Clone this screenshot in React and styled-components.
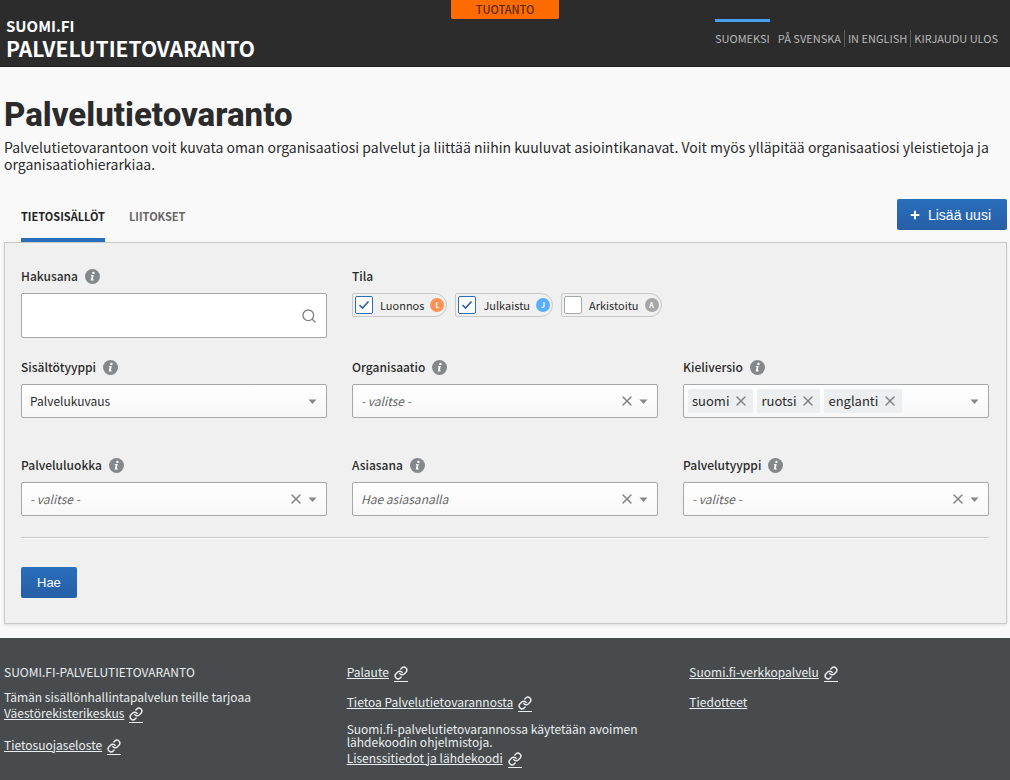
import React, { useState } from 'react';
import styled, { createGlobalStyle, css } from 'styled-components';
import { Plus, X, Link as LinkIcon, Search } from 'lucide-react';

const GlobalStyle = createGlobalStyle`
  * {
    box-sizing: border-box;
  }

  body {
    margin: 0;
    background: #f9f9f9;
    color: #2b2b2b;
    font-family: 'Noto Sans CJK SC', 'Noto Sans', sans-serif;
    font-size: 12px;
    line-height: 16px;
  }

  button,
  input,
  select {
    font: inherit;
    color: inherit;
  }
`;

const Page = styled.div`
  display: flex;
  flex-direction: column;
  min-height: 100vh;
`;

const Header = styled.header`
  display: grid;
  grid-template-columns: 1fr 108px 1fr;
  align-items: start;
  height: 67px;
  background: #2c2c2c;
  border-bottom: 1px solid #1f1b1e;
`;

const Logo = styled.div`
  display: flex;
  flex-direction: column;
  padding: 17px 0 0 6px;
  color: #fff;
  font-weight: 700;
`;

const LogoSmall = styled.span`
  font-size: 15px;
  line-height: 18px;
`;

const LogoLarge = styled.span`
  font-size: 21px;
  line-height: 26px;
`;

const Environment = styled.div`
  height: 19px;
  background: #ff6b00;
  border-radius: 0 0 2px 2px;
  color: #5a2a0c;
  font-size: 11px;
  font-weight: 500;
  line-height: 18px;
  text-align: center;
`;

const LanguageNav = styled.nav`
  display: flex;
  justify-content: flex-end;
  padding: 19px 12px 0 0;
`;

const LanguageLink = styled.a`
  padding-top: 8px;
  border-top: 3px solid ${props => (props.$active ? '#4a9fee' : 'transparent')};
  margin-left: ${props => (props.$divided ? '3px' : '8px')};
  color: #b9b9b9;
  font-size: 11px;
  line-height: 17px;
  text-decoration: none;
  white-space: nowrap;

  ${props => props.$divided && css`
    padding-left: 4px;
    background: linear-gradient(#5c5c5c, #5c5c5c) left bottom / 1px 17px no-repeat;
  `}
`;

const Main = styled.main`
  padding: 28px 3px 14px 4px;
`;

const Title = styled.h1`
  margin: 0;
  font-family: Roboto, sans-serif;
  font-size: 33px;
  font-weight: 800;
  line-height: 40px;
`;

const Intro = styled.p`
  margin: 4px 0 0;
  font-size: 14px;
  line-height: 17px;
`;

const TabBar = styled.div`
  display: flex;
  align-items: flex-start;
  justify-content: space-between;
  margin-top: 26px;
  height: 43px;
`;

const Tabs = styled.div`
  display: flex;
  gap: 24px;
  height: 100%;
  padding-left: 17px;
`;

const Tab = styled.button`
  padding: 9px 0 14px;
  border: 0;
  border-bottom: 4px solid ${props => (props.$active ? '#2a6ebb' : 'transparent')};
  background: none;
  color: ${props => (props.$active ? '#222' : '#666')};
  font-size: 11px;
  font-weight: 700;
  cursor: pointer;
`;

const PrimaryButton = styled.button`
  display: flex;
  align-items: center;
  gap: 7px;
  height: 31px;
  padding: 0 16px;
  border: 0;
  border-radius: 2px;
  background: linear-gradient(#2a6ebb, #265fa6);
  color: #fff;
  font-family: 'Liberation Sans', Arial, sans-serif;
  font-size: ${props => (props.$large ? '14px' : '13px')};
  cursor: pointer;

  svg {
    margin-left: -4px;
  }
`;

const Panel = styled.form`
  padding: 23px 17px 25px 16px;
  background: #f0f0f0;
  border: 1px solid #c8c9c9;
  box-shadow: 0 1px 3px rgba(0, 0, 0, 0.12);
`;

const Row = styled.div`
  display: grid;
  grid-template-columns: repeat(3, 1fr);
  gap: 25px;
  margin-top: ${props => props.$space || '0'};
`;

const Field = styled.div`
  min-width: 0;
`;

const FieldHead = styled.div`
  display: flex;
  align-items: center;
  gap: 7px;
  height: 20px;
  margin-bottom: 7px;
`;

const Label = styled.label`
  font-weight: 500;
`;

const InfoButton = styled.button`
  display: flex;
  padding: 0;
  border: 0;
  background: none;
  cursor: pointer;
`;

const Box = styled.div`
  display: flex;
  align-items: center;
  height: ${props => (props.$tall ? '45px' : '34px')};
  padding: 0 9px 0 ${props => (props.$tags ? '4px' : '8px')};
  border: 1px solid #a5a8a8;
  border-radius: 2px;
  background: ${props => (props.$tall ? '#fff' : 'linear-gradient(#fff, #f7f7f8)')};
`;

const control = css`
  flex: 1;
  min-width: 0;
  height: 100%;
  padding: 0;
  border: 0;
  outline: 0;
  background: none;
`;

const TextInput = styled.input`
  ${control}
`;

const Select = styled.select`
  ${control}
  appearance: none;
  color: ${props => (props.$placeholder ? '#666' : '#2b2b2b')};
  font-style: ${props => (props.$placeholder ? 'italic' : 'normal')};
`;

const IconButton = styled.button`
  display: flex;
  padding: 0;
  border: 0;
  background: none;
  color: #7d7f80;
  cursor: pointer;
`;

const Caret = styled.svg`
  flex: none;
  margin-left: 4px;
  pointer-events: none;
`;

const Tag = styled.span`
  display: flex;
  align-items: center;
  gap: 4px;
  height: 24px;
  margin-right: 4px;
  padding: 0 4px;
  border-radius: 2px;
  background: #eceeef;
  font-size: 13px;
`;

const Chips = styled.div`
  display: flex;
  gap: 8px;
`;

const Chip = styled.label`
  display: flex;
  align-items: center;
  height: 24px;
  padding: 0 2px;
  border: 1px solid #c8c9c9;
  border-radius: 2px 12px 12px 2px;
  font-size: 11px;
  cursor: pointer;
`;

const Checkbox = styled.input`
  appearance: none;
  width: 18px;
  height: 18px;
  margin: 0 7px 0 0;
  border: 1px solid #a5a8a8;
  border-radius: 2px;
  background: #fff;

  &:checked {
    border-color: #2a6ebb;
    background: #fff
      url("data:image/svg+xml,%3Csvg xmlns='http://www.w3.org/2000/svg' viewBox='0 0 16 16' fill='none' stroke='%232a5caa' stroke-width='1.6'%3E%3Cpath d='M3.500 8l3 3 6-6.500'/%3E%3C/svg%3E")
      center no-repeat;
  }
`;

const Badge = styled.span`
  width: 14px;
  height: 14px;
  margin-left: 6px;
  border-radius: 50%;
  background: ${props => props.$color};
  color: #fff;
  font-size: 7px;
  font-weight: 700;
  line-height: 14px;
  text-align: center;
`;

const Divider = styled.hr`
  height: 2px;
  margin: 21px 0 28px;
  border: 0;
  border-top: 1px solid #c8c9c9;
  background: #fff;
`;

const Footer = styled.footer`
  display: grid;
  grid-template-columns: repeat(3, 1fr);
  gap: 25px;
  flex: 1;
  padding: 26px 3px 10px 4px;
  background: #484b4d;
  color: #e9eef0;
`;

const FooterColumn = styled.div`
  display: flex;
  flex-direction: column;
  align-items: flex-start;
`;

const FooterText = styled.p`
  margin: ${props => props.$space || '0'} 0 0;
  line-height: ${props => (props.$tight ? '13px' : '16px')};
`;

const FooterLink = styled.a`
  display: flex;
  gap: 5px;
  height: 16px;
  margin-top: ${props => props.$space || '0'};
  color: inherit;
  text-decoration: underline;

  svg {
    flex: none;
    height: 17px;
    margin-top: 1px;
    border-bottom: 1px solid currentColor;
  }
`;

const Info = ({ name }) => (
  <InfoButton type="button" aria-label={`Ohje: ${name}`}>
    <svg width="15" height="15" viewBox="0 0 15 15">
      <circle cx="7.5" cy="7.5" r="7.5" fill="#85888a" />
      <circle cx="8.4" cy="3.9" r="1.2" fill="#fff" />
      <path d="M6 6h2.700L7.800 10.600h1l-.2.900H5.700l.9-4.600H5.800z" fill="#fff" />
    </svg>
  </InfoButton>
);

const CaretIcon = () => (
  <Caret width="9" height="5" viewBox="0 0 9 5">
    <path d="M0.500 0.500h8L4.500 5z" fill="#85888a" />
  </Caret>
);

// slim chain, two open loops leaning to the right
const ChainIcon = () => (
  <LinkIcon size={14} strokeWidth={2.5} />
);

const SelectField = ({ id, label, option, placeholder, clearable }) => (
  <Field>
    <FieldHead>
      <Label htmlFor={id}>{label}</Label>
      <Info name={label} />
    </FieldHead>
    <Box>
      <Select id={id} $placeholder={placeholder}>
        <option>{option}</option>
      </Select>
      {clearable && (
        <IconButton type="button" aria-label="Tyhjennä">
          <X size={16} strokeWidth={2} />
        </IconButton>
      )}
      <CaretIcon />
    </Box>
  </Field>
);

const ExternalLink = ({ children, space }) => (
  <FooterLink href="#" $space={space}>
    {children}
    <ChainIcon />
  </FooterLink>
);

const STATES = [
  { name: 'Luonnos', letter: 'L', color: '#ff9155', checked: true },
  { name: 'Julkaistu', letter: 'J', color: '#5aadfa', checked: true },
  { name: 'Arkistoitu', letter: 'A', color: '#a6a6a6', checked: false },
];

const App = () => {
  const [languages, setLanguages] = useState(['suomi', 'ruotsi', 'englanti']);

  return (
    <Page>
      <GlobalStyle />
      <Header>
        <Logo>
          <LogoSmall>SUOMI.FI</LogoSmall>
          <LogoLarge>PALVELUTIETOVARANTO</LogoLarge>
        </Logo>
        <Environment>TUOTANTO</Environment>
        <LanguageNav>
          <LanguageLink href="#" $active>SUOMEKSI</LanguageLink>
          <LanguageLink href="#">PÅ SVENSKA</LanguageLink>
          <LanguageLink href="#" $divided>IN ENGLISH</LanguageLink>
          <LanguageLink href="#" $divided>KIRJAUDU ULOS</LanguageLink>
        </LanguageNav>
      </Header>

      <Main>
        <Title>Palvelutietovaranto</Title>
        <Intro>
          Palvelutietovarantoon voit kuvata oman organisaatiosi palvelut ja liittää niihin kuuluvat
          asiointikanavat. Voit myös ylläpitää organisaatiosi yleistietoja ja organisaatiohierarkiaa.
        </Intro>

        <TabBar>
          <Tabs>
            <Tab $active>TIETOSISÄLLÖT</Tab>
            <Tab>LIITOKSET</Tab>
          </Tabs>
          <PrimaryButton type="button" $large>
            <Plus size={12} strokeWidth={4} />
            Lisää uusi
          </PrimaryButton>
        </TabBar>

        <Panel onSubmit={e => e.preventDefault()}>
          <Row>
            <Field>
              <FieldHead>
                <Label htmlFor="keyword">Hakusana</Label>
                <Info name="Hakusana" />
              </FieldHead>
              <Box $tall>
                <TextInput id="keyword" type="text" />
                <IconButton type="submit" aria-label="Hae">
                  <Search size={16} strokeWidth={2} />
                </IconButton>
              </Box>
            </Field>
            <Field>
              <FieldHead>
                <Label as="span">Tila</Label>
              </FieldHead>
              <Chips>
                {STATES.map(state => (
                  <Chip key={state.name}>
                    <Checkbox type="checkbox" defaultChecked={state.checked} />
                    {state.name}
                    <Badge $color={state.color}>{state.letter}</Badge>
                  </Chip>
                ))}
              </Chips>
            </Field>
          </Row>

          <Row $space="19px">
            <SelectField id="content-type" label="Sisältötyyppi" option="Palvelukuvaus" />
            <SelectField id="organization" label="Organisaatio" option="- valitse -" placeholder clearable />
            <Field>
              <FieldHead>
                <Label htmlFor="language">Kieliversio</Label>
                <Info name="Kieliversio" />
              </FieldHead>
              <Box $tags>
                {languages.map(language => (
                  <Tag key={language}>
                    {language}
                    <IconButton
                      type="button"
                      aria-label={`Poista ${language}`}
                      onClick={() => setLanguages(languages.filter(l => l !== language))}
                    >
                      <X size={16} strokeWidth={2} />
                    </IconButton>
                  </Tag>
                ))}
                <Select id="language" />
                <CaretIcon />
              </Box>
            </Field>
          </Row>

          <Row $space="37px">
            <SelectField id="service-class" label="Palveluluokka" option="- valitse -" placeholder clearable />
            <SelectField id="ontology" label="Asiasana" option="Hae asiasanalla" placeholder clearable />
            <SelectField id="service-type" label="Palvelutyyppi" option="- valitse -" placeholder clearable />
          </Row>

          <Divider />
          <PrimaryButton type="submit">Hae</PrimaryButton>
        </Panel>
      </Main>

      <Footer>
        <FooterColumn>
          <FooterText>SUOMI.FI-PALVELUTIETOVARANTO</FooterText>
          <FooterText $space="9px">Tämän sisällönhallintapalvelun teille tarjoaa</FooterText>
          <ExternalLink>Väestörekisterikeskus</ExternalLink>
          <ExternalLink space="16px">Tietosuojaseloste</ExternalLink>
        </FooterColumn>
        <FooterColumn>
          <ExternalLink>Palaute</ExternalLink>
          <ExternalLink space="14px">Tietoa Palvelutietovarannosta</ExternalLink>
          <FooterText $space="12px" $tight>
            Suomi.fi-palvelutietovarannossa käytetään avoimen lähdekoodin ohjelmistoja.
          </FooterText>
          <ExternalLink space="2px">Lisenssitiedot ja lähdekoodi</ExternalLink>
        </FooterColumn>
        <FooterColumn>
          <ExternalLink>Suomi.fi-verkkopalvelu</ExternalLink>
          <FooterLink href="#" $space="14px">Tiedotteet</FooterLink>
        </FooterColumn>
      </Footer>
    </Page>
  );
};

export default App;
